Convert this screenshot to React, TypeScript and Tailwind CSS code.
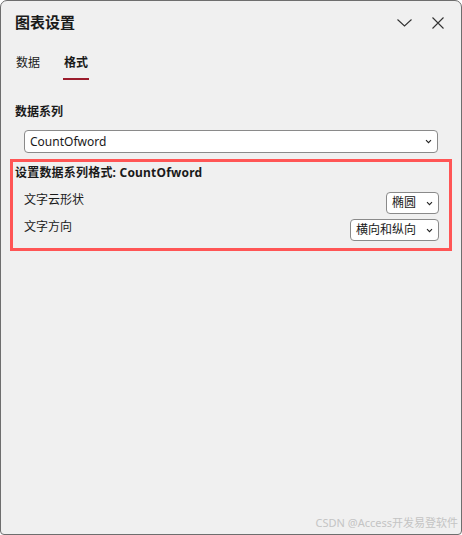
import React from "react";

const font = { fontFamily: '"Noto Sans", "Noto Sans CJK SC", sans-serif' };

const Caret = () => (
  <svg width="7" height="5" viewBox="0 0 7 5" className="shrink-0">
    <path d="M1 1.2 L3.5 3.7 L6 1.2" fill="none" stroke="#222" strokeWidth="1.1" />
  </svg>
);

const Dropdown = ({ value, className }: { value: string; className: string }) => (
  <div
    className={`flex items-center justify-between bg-white border border-[#8a8a8a] rounded-[4px] pl-[5px] pr-[5px] text-[12px] leading-4 text-[#1a1a1a] ${className}`}
  >
    <span>{value}</span>
    <Caret />
  </div>
);

const App = () => {
  return (
    <div
      style={font}
      className="relative w-[462px] h-[535px] bg-[#f0f0f0] border border-[#6e6e6e] rounded-t-[7px] rounded-b-[4px] flex flex-col text-[#1a1a1a] overflow-hidden"
    >
      {/* header */}
      <div className="h-[42px] flex items-center pl-[14px] pr-[17px]">
        <div className="text-[15px] font-semibold leading-5 flex-1">图表设置</div>
        <svg width="15" height="8" viewBox="0 0 15 8" className="mr-[20px] mt-[1px]">
          <path d="M0.5 0.5 L7.5 7 L14.5 0.5" fill="none" stroke="#333" strokeWidth="1.1" />
        </svg>
        <svg width="12" height="12" viewBox="0 0 12 12" className="mt-[1px]">
          <path d="M0.5 0.5 L11.5 11.5 M11.5 0.5 L0.5 11.5" fill="none" stroke="#333" strokeWidth="1.1" />
        </svg>
      </div>

      {/* tabs */}
      <div className="flex gap-[22px] pl-[14px] mt-[12px]">
        <div className="flex flex-col items-center">
          <span className="text-[12px] leading-4 px-[1px]">数据</span>
        </div>
        <div className="flex flex-col items-center">
          <span className="text-[12px] leading-4 font-bold px-[1px]">格式</span>
          <div className="mt-[7px] h-[2px] w-[26px] bg-[#9b1c2c]" />
        </div>
      </div>

      <div className="mt-[24px] pl-[14px] text-[12px] leading-4 font-bold">数据系列</div>
      <Dropdown value="CountOfword" className="mt-[10px] ml-[23px] w-[414px] h-[23px]" />

      {/* highlighted group */}
      <div className="mt-[6px] ml-[9px] w-[442px] h-[92px] border-[3px] border-[#ff5555] pl-[2px] pr-[10px] pt-[3px] flex flex-col">
        <div className="text-[12px] leading-4 font-bold tracking-[0.2px]">设置数据系列格式: CountOfword</div>
        <div className="mt-[11px] flex justify-between items-start pl-[9px]">
          <span className="text-[12px] leading-4">文字云形状</span>
          <Dropdown value="椭圆" className="w-[53px] h-[22px]" />
        </div>
        <div className="mt-[5px] flex justify-between items-start pl-[9px]">
          <span className="text-[12px] leading-4">文字方向</span>
          <Dropdown value="横向和纵向" className="w-[89px] h-[22px]" />
        </div>
      </div>

      <div className="absolute right-[3px] bottom-[3px] text-[11px] leading-4 text-[#c4c4c4]">
        CSDN @Access开发易登软件
      </div>
    </div>
  );
};

export default App;
